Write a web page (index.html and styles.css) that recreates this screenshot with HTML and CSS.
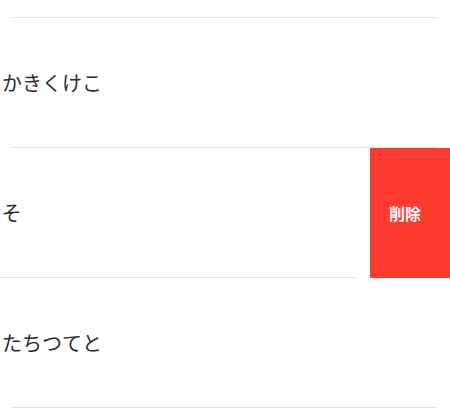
FILE: index.html
```html
<!DOCTYPE html>
<html lang="ja">
<head>
<meta charset="utf-8">
<link rel="stylesheet" href="styles.css">
</head>
<body>
<div class="list">
  <div class="lead"><div class="line"></div></div>
  <div class="row">
    <div class="cell">
      <div class="label">かきくけこ</div>
      <div class="line"></div>
    </div>
  </div>
  <div class="row swiped">
    <div class="cell">
      <div class="label">さしすせそ</div>
      <div class="line"></div>
    </div>
    <div class="action">削除</div>
  </div>
  <div class="row">
    <div class="cell">
      <div class="label">たちつてと</div>
      <div class="line"></div>
    </div>
  </div>
</div>
</body>
</html>
```

FILE: styles.css
```css
html, body {
  margin: 0;
  padding: 0;
  background: #ffffff;
}
body {
  width: 450px;
  height: 420px;
  overflow: hidden;
  font-family: "Noto Sans CJK JP", "Noto Sans", sans-serif;
}
.list {
  display: flex;
  flex-direction: column;
}
.lead {
  height: 18px;
  display: flex;
  flex-direction: column;
  justify-content: flex-end;
}
.line {
  height: 1px;
  background: #e2e2e2;
  margin: 0 13px 0 12px;
  flex: 0 0 1px;
}
.row {
  height: 130px;
  display: flex;
  overflow: hidden;
  background: #ffffff;
}
.cell {
  flex: 0 0 100%;
  display: flex;
  flex-direction: column;
  background: #ffffff;
}
.label {
  flex: 1;
  display: flex;
  align-items: center;
  padding-left: 2px;
  font-size: 20px;
  color: #2b2b2b;
  letter-spacing: 0;
}
.swiped .cell {
  margin-left: -80px;
}
.action {
  flex: 0 0 80px;
  background: #ff3b30;
  color: #ffffff;
  font-size: 16px;
  font-weight: 700;
  display: flex;
  align-items: center;
  padding-left: 19px;
  box-sizing: border-box;
}
```
